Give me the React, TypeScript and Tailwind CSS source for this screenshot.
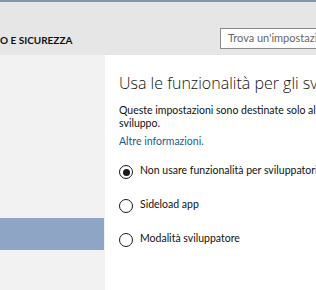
import React from "react";

const font = { fontFamily: '"Segoe UI", Lato, "Open Sans", sans-serif' };

function Radio({ checked, label }: { checked?: boolean; label: string }) {
  return (
    <div className="flex items-center gap-[7px]">
      <span className="flex h-[14px] w-[14px] shrink-0 items-center justify-center rounded-full border-[1.5px] border-[#1a1a1a]">
        {checked && <span className="h-[7px] w-[7px] rounded-full bg-[#1a1a1a]" />}
      </span>
      <span className="text-[10.5px] leading-[14px] text-[#111] -mt-[5px]">{label}</span>
    </div>
  );
}

export default function App() {
  return (
    <div className="w-[316px] h-[290px] overflow-hidden bg-white flex flex-col" style={font}>
      {/* window top edge */}
      <div className="h-[2px] bg-[#8197a9]" />

      {/* header */}
      <div className="h-[53px] bg-[#e6e6e6] flex items-start pt-[26px] justify-between">
        <h1 className="text-[10px] font-bold text-[#111] mt-[5px] whitespace-nowrap">O E SICUREZZA</h1>
        <div className="w-[100px] h-[21px] border border-[#8a8a8a] bg-white flex items-center pl-[7px] whitespace-nowrap overflow-hidden -mr-[4px]">
          <span className="text-[11px] text-[#666]">Trova un'impostazione</span>
        </div>
      </div>

      <div className="flex flex-1">
        {/* sidebar */}
        <div className="w-[105px] bg-[#f2f2f2] flex flex-col pt-[163px]">
          <div className="h-[32px] w-[104px] bg-[#8fa5c5]" />
        </div>

        {/* content */}
        <div className="flex-1 pl-[14px] pt-[18px] whitespace-nowrap overflow-hidden">
          <h2
            className="text-[16px] font-light text-[#111] leading-[20px]"
            style={{ fontFamily: '"Segoe UI", "Open Sans", sans-serif' }}
          >
            Usa le funzionalità per gli sviluppatori
          </h2>
          <p className="mt-[11px] text-[10.5px] leading-[13px] text-[#111]">
            Queste impostazioni sono destinate solo all'uso per lo
            <br />
            sviluppo.
          </p>
          <a className="block mt-[5px] text-[10.5px] leading-[13px] text-[#1a5a96]">Altre informazioni.</a>
          <div className="mt-[17px] flex flex-col gap-[20px]">
            <Radio checked label="Non usare funzionalità per sviluppatori" />
            <Radio label="Sideload app" />
            <Radio label="Modalità sviluppatore" />
          </div>
        </div>
      </div>
    </div>
  );
}
